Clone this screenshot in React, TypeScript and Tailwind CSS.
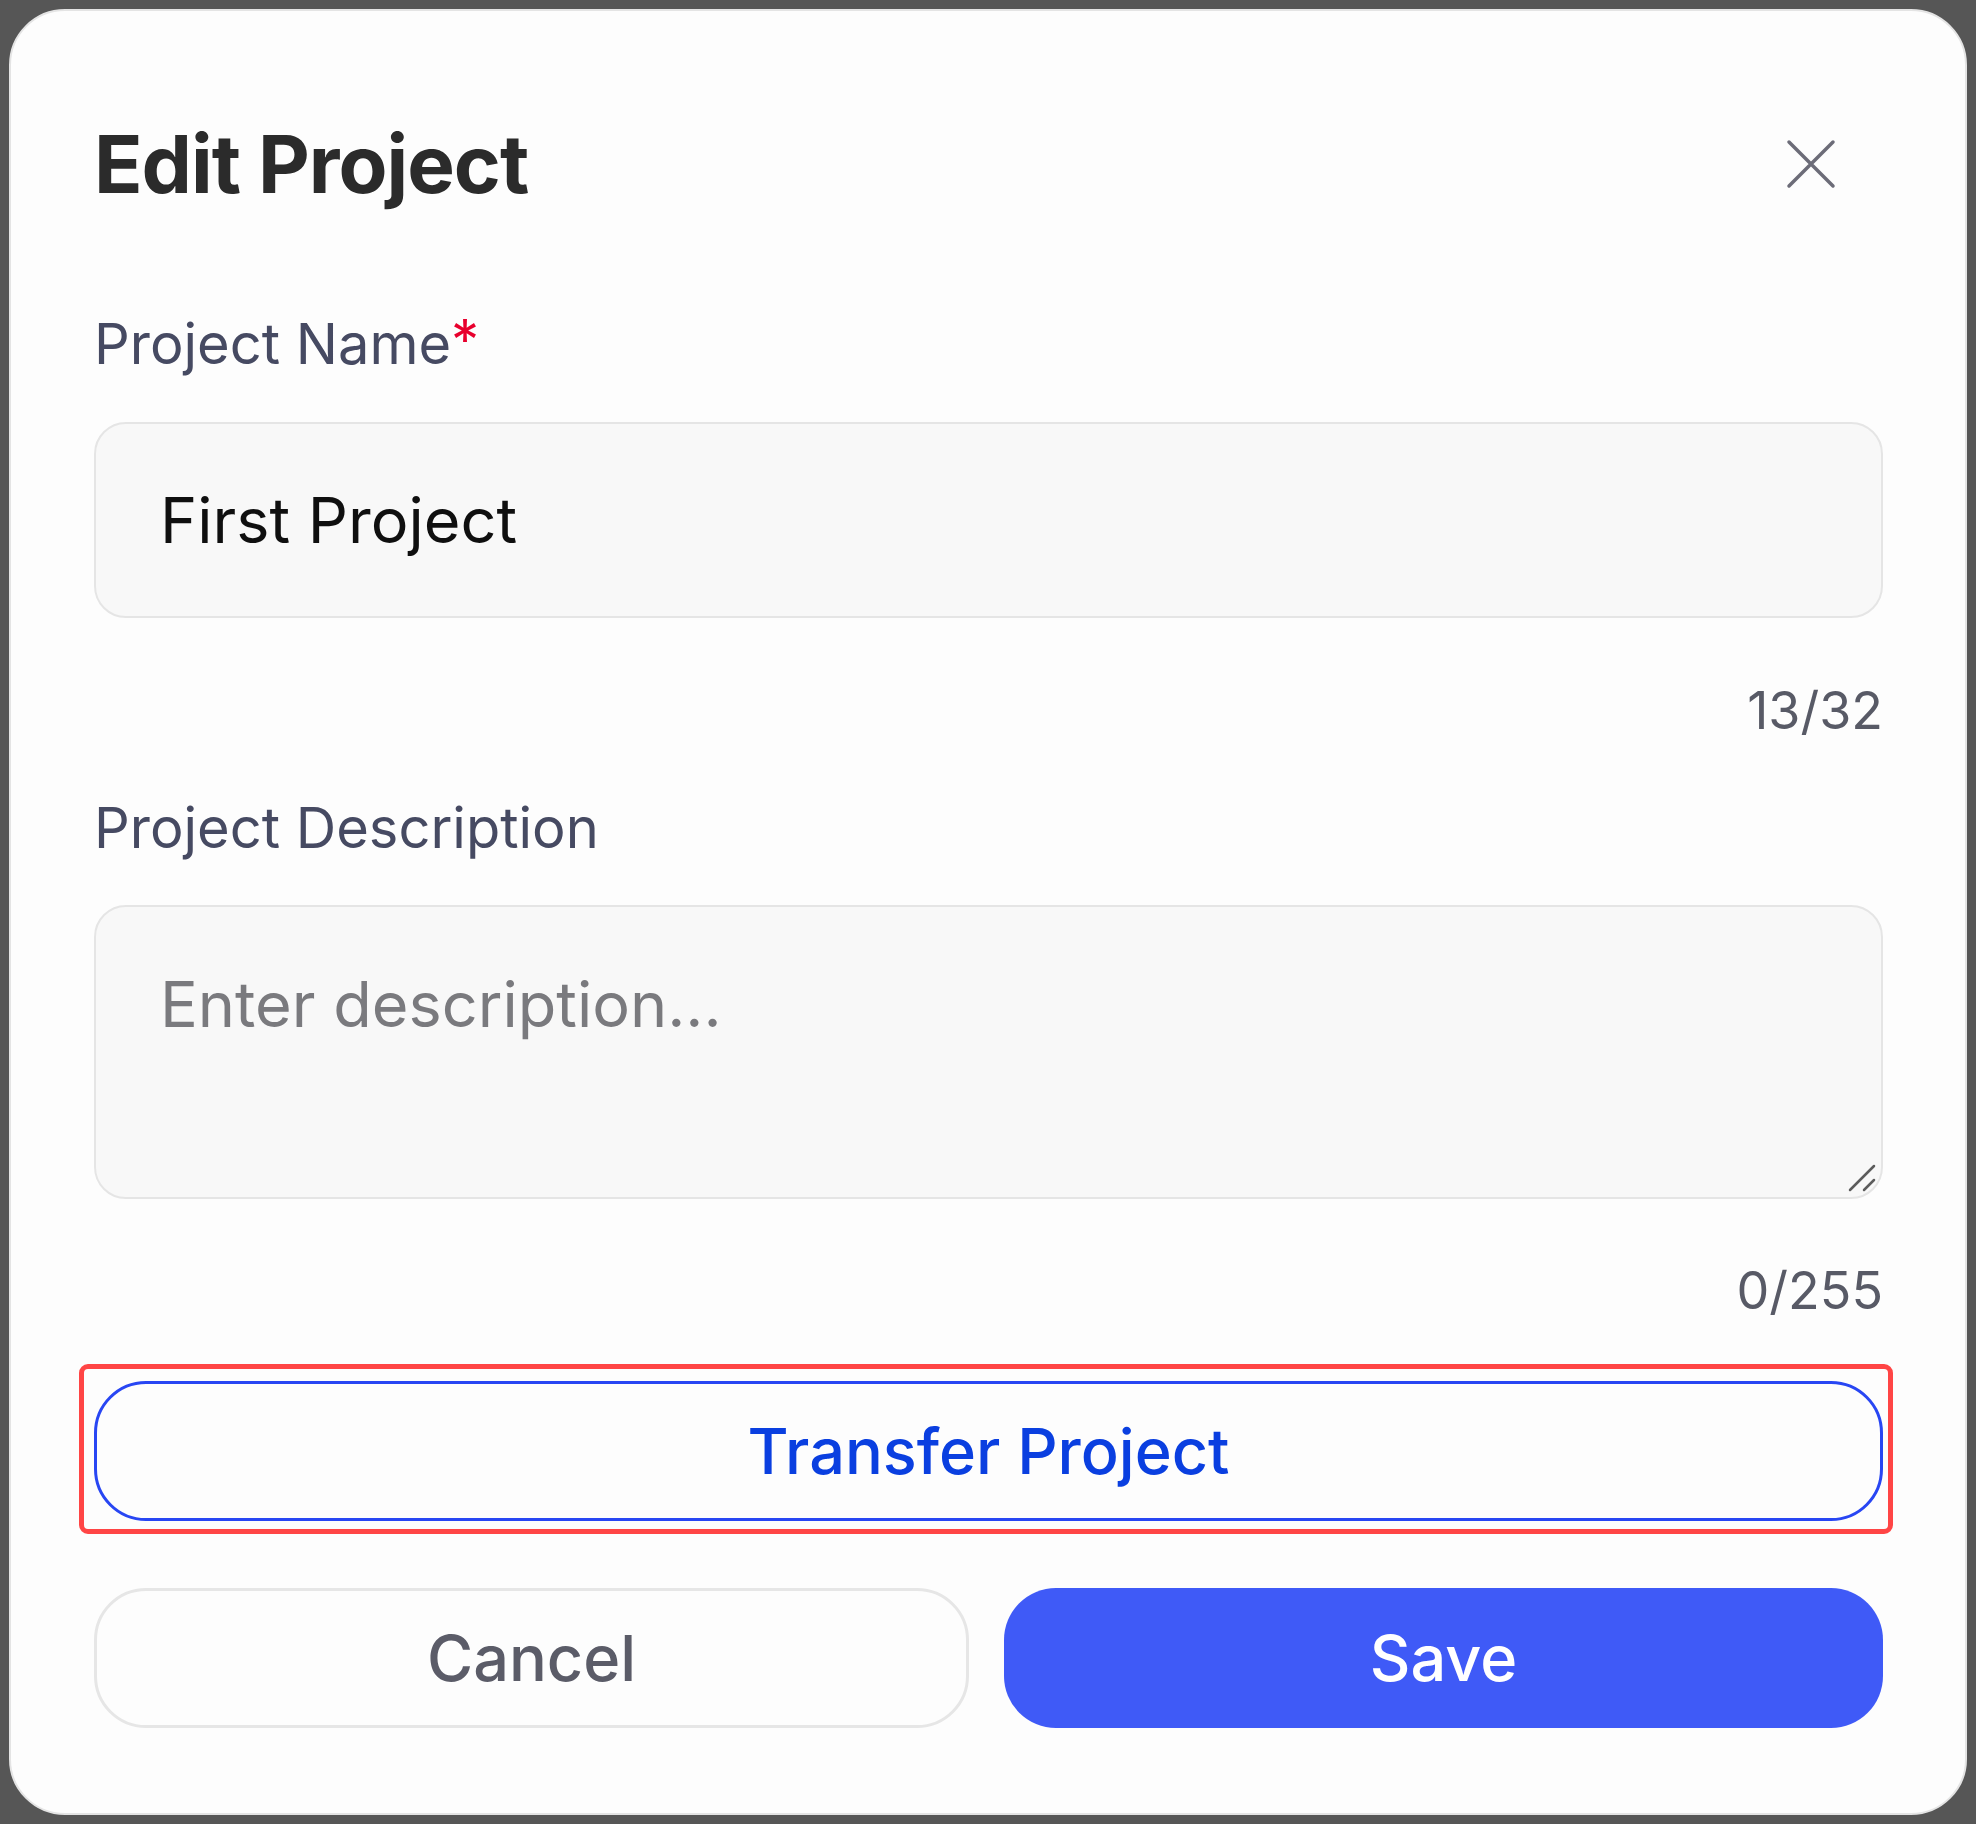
import React from "react";

export default function App() {
  return (
    <div className="w-[1976px] h-[1824px] bg-[#565656] pt-[9px] pl-[9px] font-['Inter',sans-serif]">
      <div className="w-[1958px] h-[1806px] rounded-[56px] bg-[#fdfdfd] border-2 border-[#e4e4e4] pl-[83px] pr-[82px] pt-[105px]">
        {/* Header */}
        <div className="flex items-center justify-between h-[96px]">
          <h1 className="text-[80px] leading-[96px] font-bold text-[#2b2b2b] tracking-[-1px]">Edit Project</h1>
          <button className="mr-[47px] w-[50px] h-[50px] flex items-center justify-center">
            <svg width="50" height="50" viewBox="0 0 50 50" fill="none">
              <path d="M3 3L47 47M47 3L3 47" stroke="#6c6c78" strokeWidth="3.5" strokeLinecap="round" />
            </svg>
          </button>
        </div>

        {/* Project Name */}
        <div className="mt-[98px] text-[56px] leading-[68px] text-[#464a62]">
          Project Name<span className="text-[#e8002d] relative top-[-4px]">*</span>
        </div>
        <input
          defaultValue="First Project"
          readOnly
          className="mt-[44px] block w-full h-[196px] rounded-[32px] bg-[#f8f8f8] border-2 border-[#e5e5e5] pl-[64px] text-[63px] text-[#0f0f0f] outline-none"
        />
        <div className="mt-[61px] text-right text-[52px] leading-[63px] text-[#585a66]">13/32</div>

        {/* Project Description */}
        <div className="mt-[52px] text-[56px] leading-[68px] text-[#464a62]">Project Description</div>
        <div className="relative mt-[43px]">
          <textarea
            placeholder="Enter description..."
            className="block w-full h-[294px] resize-none rounded-[32px] bg-[#f8f8f8] border-2 border-[#e5e5e5] pl-[64px] pt-[50px] text-[63px] text-[#0f0f0f] placeholder:text-[#7a7a7e] outline-none"
          />
          <svg className="absolute right-[6px] bottom-[6px]" width="30" height="30" viewBox="0 0 30 30" fill="none">
            <path d="M3 27L27 3M17 27L27 17" stroke="#5c5c5c" strokeWidth="2.5" strokeLinecap="round" />
          </svg>
        </div>
        <div className="mt-[60px] text-right text-[52px] leading-[63px] text-[#585a66]">0/255</div>

        {/* Transfer */}
        <div className="relative mt-[59px]">
          <div className="absolute -left-[15px] -right-[10px] -top-[17px] -bottom-[13px] border-[5px] border-[#ff4545] rounded-[9px] pointer-events-none" />
          <button className="w-full h-[140px] rounded-[52px] border-[3px] border-[#2846f3] bg-[#fdfdfd] text-[63px] font-medium text-[#0a3fe0]">
            Transfer Project
          </button>
        </div>

        {/* Actions */}
        <div className="mt-[67px] flex gap-[35px]">
          <button className="w-[875px] h-[140px] rounded-[52px] border-[3px] border-[#e6e6e6] bg-[#fdfdfd] text-[63px] font-medium text-[#5b5c68]">
            Cancel
          </button>
          <button className="flex-1 h-[140px] rounded-[52px] bg-[#3f5af7] text-[63px] font-medium text-white">
            Save
          </button>
        </div>
      </div>
    </div>
  );
}
